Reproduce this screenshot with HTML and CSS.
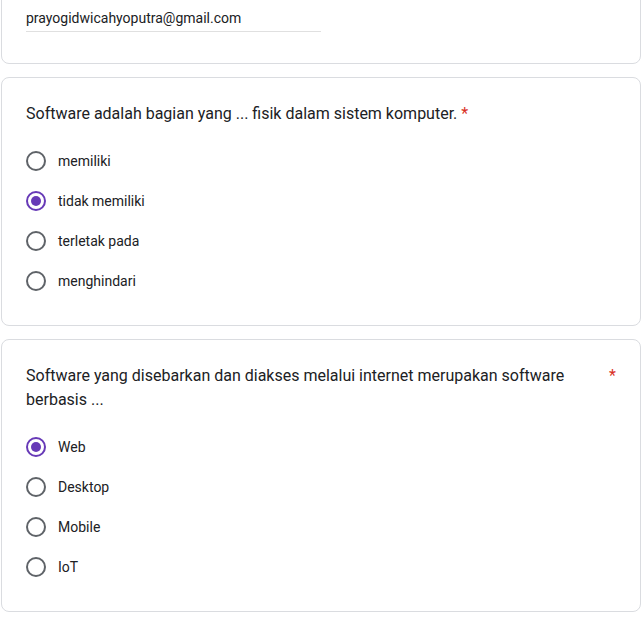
FILE: index.html
```html
<!DOCTYPE html>
<html>
<head>
<meta charset="utf-8">
<link rel="stylesheet" href="styles.css">
</head>
<body>
<div class="page">
  <div class="card card-email">
    <div class="email">prayogidwicahyoputra@gmail.com</div>
  </div>

  <div class="card">
    <div class="title"><span class="title-text">Software adalah bagian yang ... fisik dalam sistem komputer.</span><span class="req">*</span></div>
    <div class="options">
      <div class="opt"><span class="radio"></span><span class="label">memiliki</span></div>
      <div class="opt"><span class="radio checked"></span><span class="label">tidak memiliki</span></div>
      <div class="opt"><span class="radio"></span><span class="label">terletak pada</span></div>
      <div class="opt"><span class="radio"></span><span class="label">menghindari</span></div>
    </div>
  </div>

  <div class="card">
    <div class="title split"><span class="title-text">Software yang disebarkan dan diakses melalui internet merupakan software berbasis ...</span><span class="req">*</span></div>
    <div class="options">
      <div class="opt"><span class="radio checked"></span><span class="label">Web</span></div>
      <div class="opt"><span class="radio"></span><span class="label">Desktop</span></div>
      <div class="opt"><span class="radio"></span><span class="label">Mobile</span></div>
      <div class="opt"><span class="radio"></span><span class="label">IoT</span></div>
    </div>
  </div>
</div>
</body>
</html>
```
FILE: styles.css
```css
html, body {
  margin: 0;
  padding: 0;
  background: #ffffff;
  overflow: hidden;
}
body {
  font-family: Roboto, "Noto Sans", Arial, sans-serif;
  color: #202124;
}
.page {
  padding: 0 2px 0 1px;
  display: flex;
  flex-direction: column;
  gap: 13px;
}
.card {
  border: 1px solid #dadce0;
  border-radius: 8px;
  background: #fff;
  padding: 24px;
}
.card-email {
  margin-top: -17px;
  padding-bottom: 31px;
}
.email {
  font-size: 14px;
  line-height: 20px;
  width: 295px;
  padding-bottom: 3px;
  border-bottom: 1px solid #e0e0e0;
}
.title {
  display: flex;
  font-size: 16px;
  line-height: 24px;
}
.title.split .title-text {
  flex: 1;
  padding-right: 8px;
}
.req {
  color: #d93025;
  padding-left: 4px;
}
.options {
  margin-top: 15px;
  display: flex;
  flex-direction: column;
}
.opt {
  height: 40px;
  display: flex;
  align-items: center;
  gap: 12px;
  font-size: 14px;
}
.radio {
  box-sizing: border-box;
  width: 20px;
  height: 20px;
  border: 2px solid #5f6368;
  border-radius: 50%;
  display: flex;
  align-items: center;
  justify-content: center;
  flex: none;
}
.radio.checked {
  border-color: #673ab7;
}
.radio.checked::after {
  content: "";
  width: 10px;
  height: 10px;
  border-radius: 50%;
  background: #673ab7;
}
```
